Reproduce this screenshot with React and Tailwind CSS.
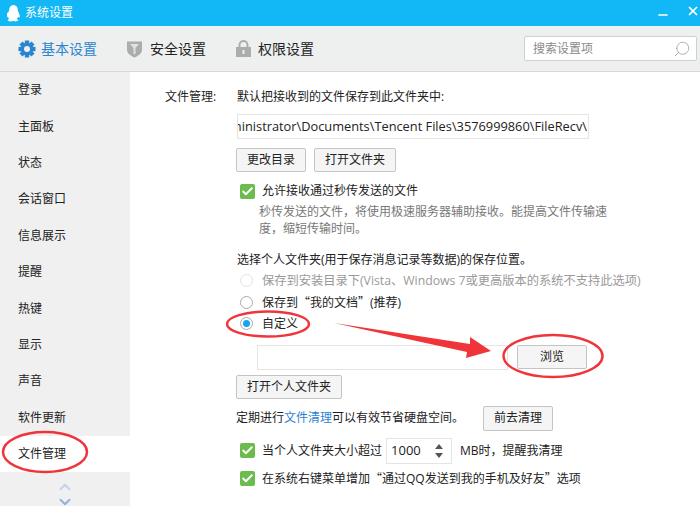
import { Search, ChevronUp, ChevronDown, Minus, X, Check } from "lucide-react";

const font = { fontFamily: '"Open Sans", "Noto Sans CJK SC", sans-serif' };

const menu = ["登录", "主面板", "状态", "会话窗口", "信息展示", "提醒", "热键", "显示", "声音", "软件更新", "文件管理"];

const comma = "\uFF0C";
const hint = `秒传发送的文件${comma}将使用极速服务器辅助接收。能提高文件传输速度${comma}缩短传输时间。`;

function Btn({ children, className = "" }) {
  return (
    <div className={`flex items-center justify-center rounded-[2px] border border-[#c4c4c4] bg-[#f5f5f5] text-[12px] text-[#222] ${className}`}>
      {children}
    </div>
  );
}

// full width quotes, Open Sans would draw them narrow
function Q({ children }) {
  return <span className="font-['Noto_Sans_CJK_SC']">{children}</span>;
}

function Checked({ children }) {
  return (
    <div className="flex items-center gap-[7px]">
      <div className="flex h-[15px] w-[15px] shrink-0 items-center justify-center rounded-[2px] bg-[#6cbb4f]">
        <Check size={13} strokeWidth={3.5} className="text-white" />
      </div>
      {children}
    </div>
  );
}

function Radio({ state, children }) {
  return (
    <div className={`flex h-[21.5px] items-center gap-[9px] ${state === "off" ? "text-[#999]" : "text-[#222]"}`}>
      <div className={`flex h-[13px] w-[13px] items-center justify-center rounded-full border bg-white ${state === "off" ? "border-[#e2e2e2]" : "border-[#aaa]"}`}>
        {state === "on" && <div className="h-[7px] w-[7px] rounded-full bg-[#12a5f0]" />}
      </div>
      {children}
    </div>
  );
}

function Gear() {
  const teeth = [0, 45, 90, 135, 180, 225, 270, 315];
  return (
    <svg width="18" height="18" viewBox="0 0 18 18">
      {teeth.map((a) => (
        <rect key={a} x="6.800" y="0.500" width="4.400" height="5" fill="#2b84d0" transform={`rotate(${a} 9 9)`} />
      ))}
      <circle cx="9" cy="9" r="6.300" fill="#2b84d0" />
      <circle cx="9" cy="9" r="3" fill="#eef0f0" />
    </svg>
  );
}

function Annotations() {
  return (
    <svg className="absolute left-0 top-0" width="700" height="506" fill="none">
      <ellipse cx="268" cy="324" rx="41" ry="12.500" stroke="#f0353a" strokeWidth="2.500" />
      <ellipse cx="553" cy="356" rx="49.500" ry="21" stroke="#f0353a" strokeWidth="2.500" />
      <ellipse cx="45" cy="452" rx="42" ry="20" stroke="#f0353a" strokeWidth="2.500" />
      <polygon points="334,323 470,344 470,337 491,351 466,358 467,352" fill="#f0353a" />
    </svg>
  );
}

export default function App() {
  return (
    <div style={font} className="relative flex h-[506px] w-[700px] flex-col overflow-hidden bg-white text-[12px] text-[#222]">
      {/* Title bar */}
      <div className="flex h-[26px] shrink-0 items-center bg-[#12b7f5] pl-[7px] text-white">
        <svg width="13" height="17" viewBox="0 0 13 17" fill="white">
          <path d="M6.500 0C9.300 0 10.800 2.200 10.800 5c0 1 .6 2 1.200 3.300.8 1.800 1.100 3.800.5 4.200-.4.200-.9-.3-1.300-1-.2 1-.7 1.800-1.300 2.400.9.400 1.400.9 1.400 1.400 0 .7-1.600 1.100-3 1.100-1 0-2-.2-2.300-.6-.3.400-1.300.6-2.300.6-1.400 0-3-.4-3-1.100 0-.5.500-1 1.400-1.400-.6-.6-1.100-1.400-1.300-2.400-.4.700-.9 1.200-1.300 1-.6-.4-.3-2.400.5-4.200C1.600 7 2.200 6 2.200 5 2.200 2.200 3.700 0 6.500 0z" />
        </svg>
        <span className="ml-[5px]">系统设置</span>
        <div className="ml-auto flex items-center gap-[16px]">
          <Minus size={14} strokeWidth={2.500} className="translate-y-[2px]" />
          <X size={14} strokeWidth={3} className="-translate-y-[2px]" />
        </div>
      </div>

      {/* Tabs */}
      <div className="flex h-[46px] shrink-0 items-center border-b border-[#d8d8d8] bg-[#eef0f0] pl-[18px] pr-[3px] text-[14px]">
        <div className="flex items-center gap-[5px] text-[#2b84d0]">
          <Gear />
          <span>基本设置</span>
        </div>
        <div className="ml-[30px] flex items-center gap-[8px]">
          <svg width="15" height="18" viewBox="0 0 15 18">
            <path d="M0 1.500h15v8c0 4-4 6.500-7.500 8C4 16 0 13.500 0 9.500z" fill="#a9adad" />
            <path d="M3 4h9L8.500 8v6h-2V8z" fill="#dfe2e2" />
          </svg>
          <span>安全设置</span>
        </div>
        <div className="ml-[30px] flex items-center gap-[7px]">
          <svg width="15" height="17" viewBox="0 0 15 17">
            <path d="M3.500 8V5a4 4 0 0 1 8 0v3" fill="none" stroke="#a9adad" strokeWidth="2" />
            <rect y="7" width="15" height="10" fill="#a9adad" />
            <rect x="6.500" y="10" width="2" height="4" fill="#eef0f0" />
          </svg>
          <span>权限设置</span>
        </div>
        <div className="ml-auto flex h-[25px] w-[173px] items-center justify-between rounded-[2px] border border-[#d0d0d0] bg-white pl-[8px] pr-[5px] text-[12px] text-[#8a8a8a]">
          <span>搜索设置项</span>
          <Search size={18} strokeWidth={1.200} className="-scale-x-100 text-[#aaa]" />
        </div>
      </div>

      <div className="flex min-h-0 flex-1">
        {/* Sidebar */}
        <div className="flex w-[130px] shrink-0 flex-col bg-[#f0f0f0]">
          {menu.map((m) => (
            <div
              key={m}
              className={`flex h-[36.400px] shrink-0 items-center pl-[18px] ${m === "文件管理" ? "bg-white" : ""}`}
            >
              {m}
            </div>
          ))}
          <div className="flex flex-col items-center pt-[6px] leading-none">
            <ChevronUp size={18} strokeWidth={2.500} className="text-[#c3d3e8]" />
            <ChevronDown size={18} strokeWidth={2.500} className="-mt-[3px] text-[#8fb0dc]" />
          </div>
        </div>

        {/* Content */}
        <div className="flex min-w-0 flex-1 pl-[35px] pt-[15px]">
          <div className="w-[71px] shrink-0 leading-[20px]">文件管理:</div>
          <div className="min-w-0 flex-1">
            <div className="ml-[1px] leading-[20px]">默认把接收到的文件保存到此文件夹中:</div>
            <div className="ml-[1px] mt-[7px] flex h-[25px] w-[352px] items-center justify-end overflow-hidden whitespace-nowrap border border-[#e4e4e4] pr-[1px] text-[12.800px]">
              C:\Users\Administrator\Documents\Tencent Files\3576999860\FileRecv\
            </div>
            <div className="mt-[9px] flex gap-[8px]">
              <Btn className="h-[24px] w-[70px]">更改目录</Btn>
              <Btn className="h-[24px] w-[82px]">打开文件夹</Btn>
            </div>
            <div className="ml-[4px] mt-[9px] leading-[20px]">
              <Checked>允许接收通过秒传发送的文件</Checked>
              <div className="ml-[19px] mt-[2px] w-[350px] leading-[17px] text-[#777]">{hint}</div>
            </div>
            <div className="ml-[1px] mt-[13px] leading-[20px]">选择个人文件夹(用于保存消息记录等数据)的保存位置。</div>
            <div className="ml-[4px] flex flex-col">
              <Radio state="off"><span className="text-[12.250px]">保存到安装目录下(Vista、Windows 7或更高版本的系统不支持此选项)</span></Radio>
              <Radio state="idle"><span>保存到<Q>“</Q>我的文档<Q>”</Q>(推荐)</span></Radio>
              <Radio state="on">自定义</Radio>
            </div>
            <div className="ml-[21px] mt-[10px] flex items-center gap-[9px]">
              <div className="h-[25px] w-[251px] border border-[#e4e4e4]" />
              <Btn className="h-[24px] w-[70px]">浏览</Btn>
            </div>
            <Btn className="mt-[5px] h-[24px] w-[106px]">打开个人文件夹</Btn>
            <div className="mt-[7px] flex items-center">
              <span className="w-[247px]">定期进行<span className="text-[#2b84d0]">文件清理</span>可以有效节省硬盘空间。</span>
              <Btn className="h-[25px] w-[70px]">前去清理</Btn>
            </div>
            <div className="ml-[4px] mt-[7px] flex flex-col gap-[5px]">
              <Checked>
                <div className="flex items-center">
                  <span>当个人文件夹大小超过</span>
                  <div className="ml-[4px] flex h-[26px] w-[66px] items-center justify-between border border-[#e4e4e4] pl-[4px] pr-[8px] text-[13px]">
                    <span>1000</span>
                    <div className="flex flex-col items-center gap-[4px]">
                      <div className="h-0 w-0 border-x-[4px] border-b-[5px] border-x-transparent border-b-[#555]" />
                      <div className="h-0 w-0 border-x-[4px] border-t-[5px] border-x-transparent border-t-[#555]" />
                    </div>
                  </div>
                  <span className="ml-[8px]">{`MB时${comma}提醒我清理`}</span>
                </div>
              </Checked>
              <Checked><span>在系统右键菜单增加<Q>“</Q>通过QQ发送到我的手机及好友<Q>”</Q>选项</span></Checked>
            </div>
          </div>
        </div>
      </div>

      <Annotations />
    </div>
  );
}
